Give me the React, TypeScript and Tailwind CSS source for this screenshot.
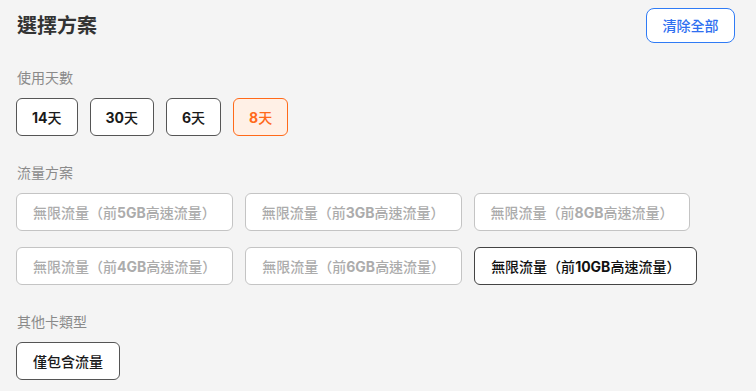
import { useState } from 'react';

const DAYS = [14, 30, 6, 8];
const PLANS = [
  { gb: 5, disabled: true },
  { gb: 3, disabled: true },
  { gb: 8, disabled: true },
  { gb: 4, disabled: true },
  { gb: 6, disabled: true },
  { gb: 10, disabled: false },
];

const FONT = "font-['Inter','Noto_Sans_CJK_TC',sans-serif]";

export default function App() {
  const [day, setDay] = useState(8);
  const [plan, setPlan] = useState(10);

  return (
    <div className={`min-h-[391px] w-full bg-[#f4f4f4] pl-4 pr-[21px] pt-2 ${FONT}`}>
      {/* Header */}
      <div className="flex h-[35px] items-center justify-between">
        <h1 className="pl-px text-[20px] font-semibold leading-none text-[#333333]">選擇方案</h1>
        <button className="flex h-[35px] w-[89px] items-center justify-center rounded-lg border border-[#2f7bf5] bg-white text-[14px] font-medium text-[#2f6ff0]">
          清除全部
        </button>
      </div>

      {/* 使用天數 */}
      <div className="mt-[25px]">
        <div className="mb-2.5 pl-px text-[14px] leading-5 text-[#8a8a8a]">使用天數</div>
        <div className="flex gap-3">
          {DAYS.map((d) => (
            <button
              key={d}
              onClick={() => setDay(d)}
              className={`flex h-[38px] items-center rounded-[6px] border px-[15px] text-[14px] font-medium ${
                day === d
                  ? 'border-[#ff6a1a] bg-[#fff0e6] text-[#ff6a1a]'
                  : 'border-[#555555] bg-white text-[#1a1a1a]'
              }`}
            >
              <span className="font-bold">{d}</span>天
            </button>
          ))}
        </div>
      </div>

      {/* 流量方案 */}
      <div className="mt-[27px]">
        <div className="mb-2.5 pl-px text-[14px] leading-5 text-[#8a8a8a]">流量方案</div>
        <div className="flex flex-wrap gap-x-3 gap-y-4">
          {PLANS.map((p) => (
            <button
              key={p.gb}
              disabled={p.disabled}
              onClick={() => setPlan(p.gb)}
              className={`flex h-[38px] items-center rounded-[6px] border bg-white px-4 text-[14px] font-medium ${
                p.disabled
                  ? 'border-[#c4c4c4] text-[#acacac]'
                  : plan === p.gb
                    ? 'border-[#444444] text-[#111111]'
                    : 'border-[#555555] text-[#1a1a1a]'
              }`}
            >
              無限流量（前<span className="font-bold">{p.gb}GB</span>高速流量）
            </button>
          ))}
        </div>
      </div>

      {/* 其他卡類型 */}
      <div className="mt-[27px]">
        <div className="mb-2.5 pl-px text-[14px] leading-5 text-[#8a8a8a]">其他卡類型</div>
        <div className="flex">
          <button className="flex h-[38px] w-[104px] items-center justify-center rounded-[6px] border border-[#555555] bg-white text-[14px] font-medium text-[#1a1a1a]">
            僅包含流量
          </button>
        </div>
      </div>
    </div>
  );
}
